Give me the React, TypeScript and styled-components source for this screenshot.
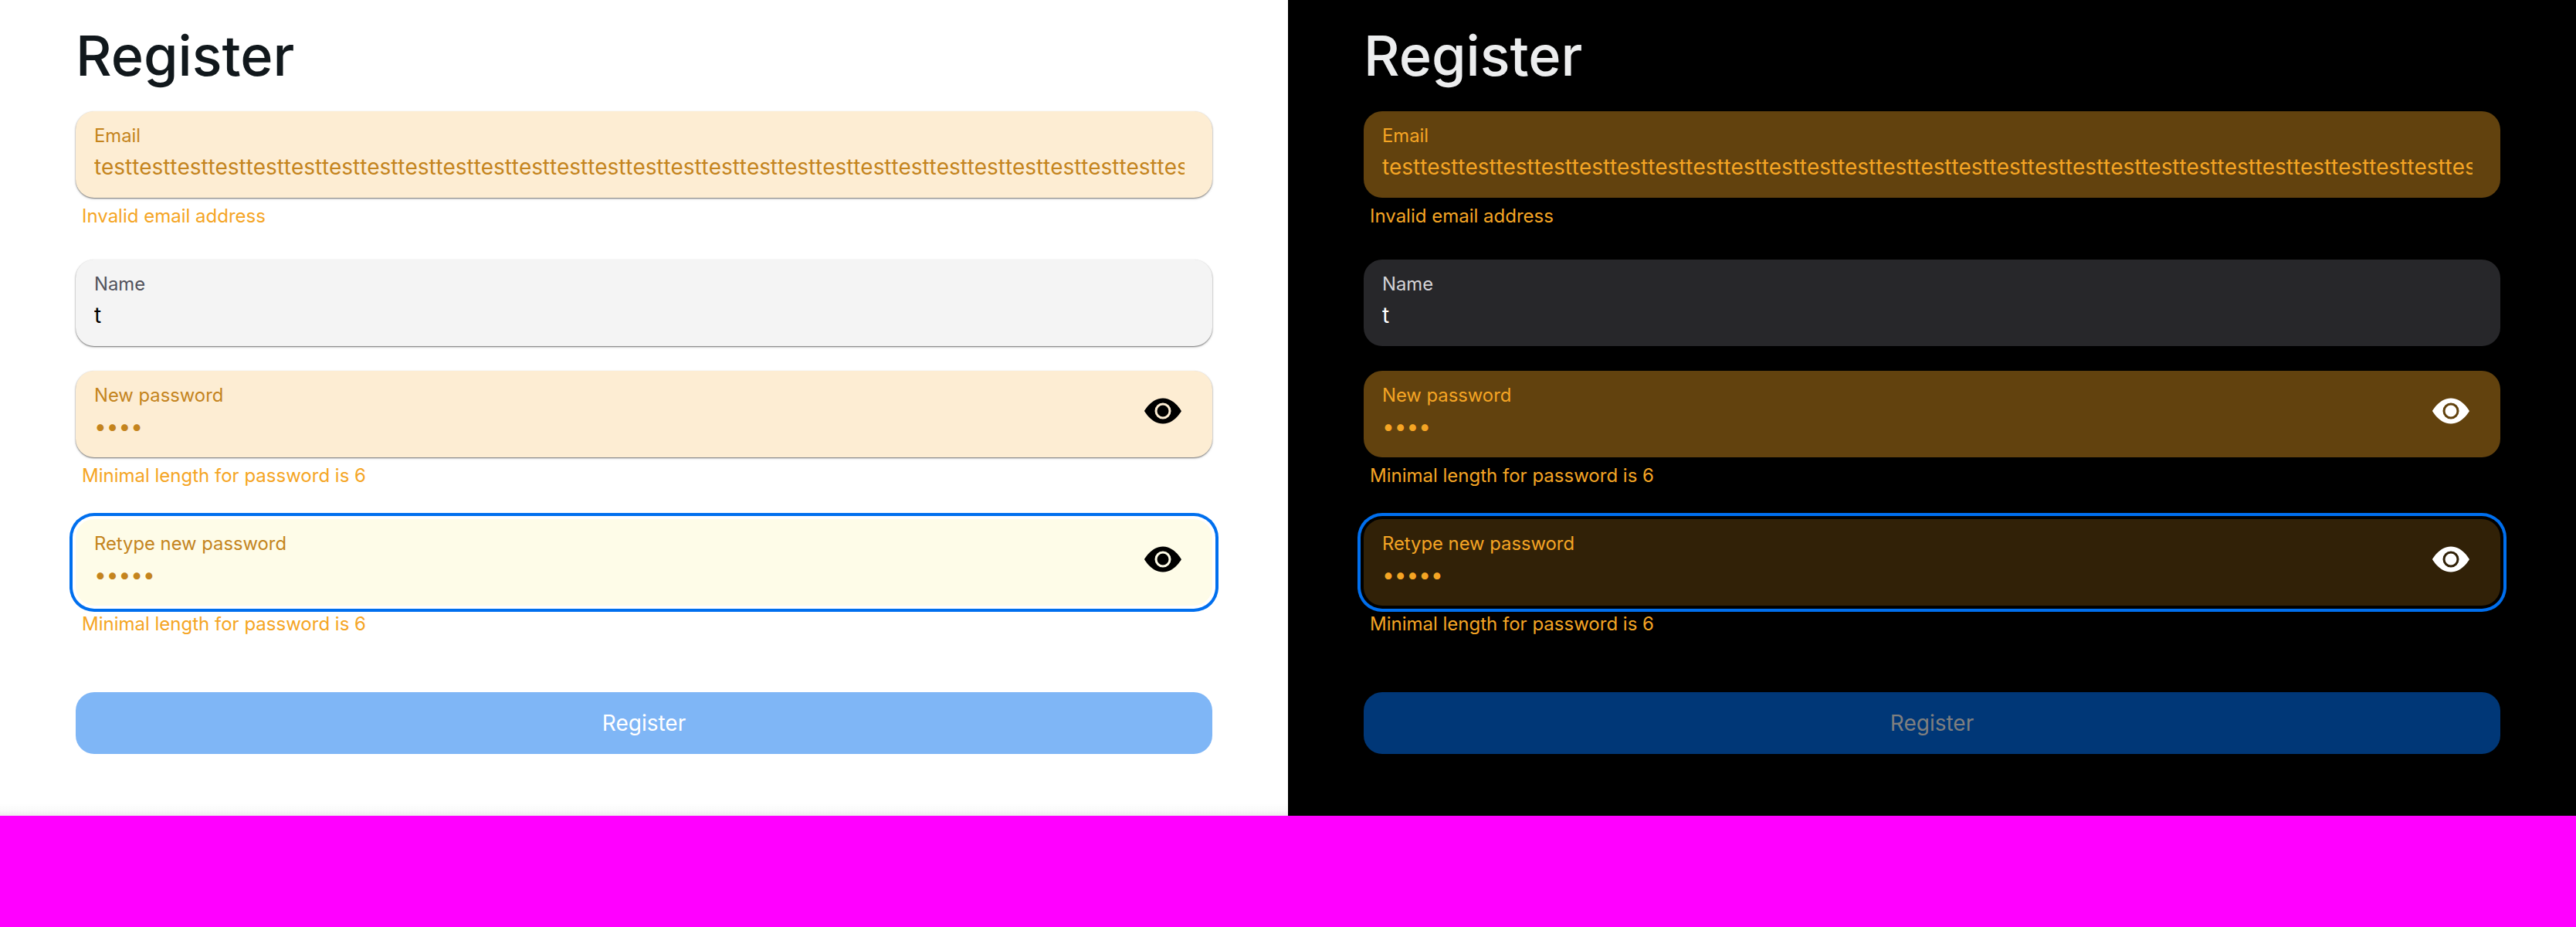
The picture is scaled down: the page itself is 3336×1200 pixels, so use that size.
import React from "react";
import styled, { createGlobalStyle, ThemeProvider } from "styled-components";
import { BsEyeFill } from "react-icons/bs";

const light = {
  page: "#ffffff",
  pageEdge: "linear-gradient(to top, rgba(0, 0, 0, 0.07), rgba(0, 0, 0, 0.02) 7px, transparent 16px)",
  title: "#11181c",
  field: "#f4f4f4",
  label: "#52525b",
  value: "#000000",
  warnField: "#fdedd3",
  warnFocus: "#fefce8",
  warnText: "#c4841d",
  icon: "#000000",
  button: "#7fb6f6",
  buttonText: "#ffffff",
};

const dark: typeof light = {
  page: "#000000",
  pageEdge: "none",
  title: "#ecedee",
  field: "#27272a",
  label: "#d4d4d8",
  value: "#ffffff",
  warnField: "#62420e",
  warnFocus: "#312107",
  warnText: "#f5a524",
  icon: "#ffffff",
  button: "#003777",
  buttonText: "#7f7f7f",
};

type Palette = { theme: typeof light };

const GlobalStyle = createGlobalStyle`
  * { box-sizing: border-box; }
  body {
    margin: 0;
    background: #ff00ff;
    font-family: Inter, "Liberation Sans", sans-serif;
  }
`;

const Split = styled.main`
  display: grid;
  grid-template-columns: 1fr 1fr;
  min-height: 1200px;
  align-items: start;
`;

const Panel = styled.section<Palette>`
  height: 1056px;
  padding: 32px 98px 80px;
  background: ${(p) => p.theme.pageEdge} ${(p) => p.theme.page};
`;

const Title = styled.h1<Palette>`
  margin: 0 0 32px;
  font-size: 72px;
  line-height: 80px;
  font-weight: 500;
  color: ${(p) => p.theme.title};
`;

const Form = styled.form`
  display: flex;
  flex-direction: column;
  gap: 32px;
`;

const Field = styled.div`
  display: flex;
  flex-direction: column;
`;

const Box = styled.label<{ $invalid?: boolean; $focused?: boolean } & Palette>`
  display: flex;
  height: 112px;
  padding: 16px 24px;
  border-radius: 24px;
  background: ${(p) =>
    p.$focused ? p.theme.warnFocus : p.$invalid ? p.theme.warnField : p.theme.field};
  box-shadow: ${(p) =>
    p.$focused
      ? `0 0 0 4px ${p.theme.page}, 0 0 0 8px #006fee`
      : "0 2px 4px rgba(0, 0, 0, 0.06), 0 1px 2px rgba(0, 0, 0, 0.55)"};
  color: ${(p) => (p.$invalid ? p.theme.warnText : p.theme.value)};
`;

const Texts = styled.div`
  flex: 1;
  min-width: 0;
  display: flex;
  flex-direction: column;
  gap: 5px;
  padding-right: 12px;
`;

const Label = styled.span<{ $invalid?: boolean } & Palette>`
  font-size: 23.8px;
  line-height: 31px;
  color: ${(p) => (p.$invalid ? p.theme.warnText : p.theme.label)};
`;

const Input = styled.input`
  width: 100%;
  height: 40px;
  padding: 0;
  border: 0;
  outline: 0;
  background: transparent;
  color: inherit;
  font: 400 28px/40px Inter, "Liberation Sans", sans-serif;

  &[type="text"] {
    font-kerning: none;
    letter-spacing: -0.065px;
  }
`;

const Reveal = styled.span<Palette>`
  display: flex;
  height: 48px;
  margin: 12px 16px 0 0;
  font-size: 48px;
  color: ${(p) => p.theme.icon};
`;

const Helper = styled.div`
  padding: 8px;
  font-size: 24px;
  line-height: 32px;
  color: #f5a524;
`;

const Submit = styled.button<Palette>`
  height: 80px;
  margin-top: 32px;
  border: 0;
  border-radius: 24px;
  background: ${(p) => p.theme.button};
  color: ${(p) => p.theme.buttonText};
  font: 400 28px/40px Inter, "Liberation Sans", sans-serif;
`;

type FieldSpec = {
  label: string;
  value: string;
  error?: string;
  password?: boolean;
  focused?: boolean;
};

const fields: FieldSpec[] = [
  { label: "Email", value: "test".repeat(40), error: "Invalid email address" },
  { label: "Name", value: "t" },
  { label: "New password", value: "test", error: "Minimal length for password is 6", password: true },
  {
    label: "Retype new password",
    value: "testt",
    error: "Minimal length for password is 6",
    password: true,
    focused: true,
  },
];

function TextField({ label, value, error, password, focused }: FieldSpec) {
  return (
    <Field>
      <Box $invalid={!!error} $focused={focused}>
        <Texts>
          <Label $invalid={!!error}>{label}</Label>
          <Input type={password ? "password" : "text"} defaultValue={value} spellCheck={false} />
        </Texts>
        {password && (
          <Reveal>
            <BsEyeFill />
          </Reveal>
        )}
      </Box>
      {error && <Helper>{error}</Helper>}
    </Field>
  );
}

function RegisterPanel({ palette }: { palette: typeof light }) {
  return (
    <ThemeProvider theme={palette}>
      <Panel>
        <Title>Register</Title>
        <Form onSubmit={(e) => e.preventDefault()}>
          {fields.map((f) => (
            <TextField key={f.label} {...f} />
          ))}
          <Submit type="submit">Register</Submit>
        </Form>
      </Panel>
    </ThemeProvider>
  );
}

export default function App() {
  return (
    <>
      <GlobalStyle />
      <Split>
        <RegisterPanel palette={light} />
        <RegisterPanel palette={dark} />
      </Split>
    </>
  );
}
